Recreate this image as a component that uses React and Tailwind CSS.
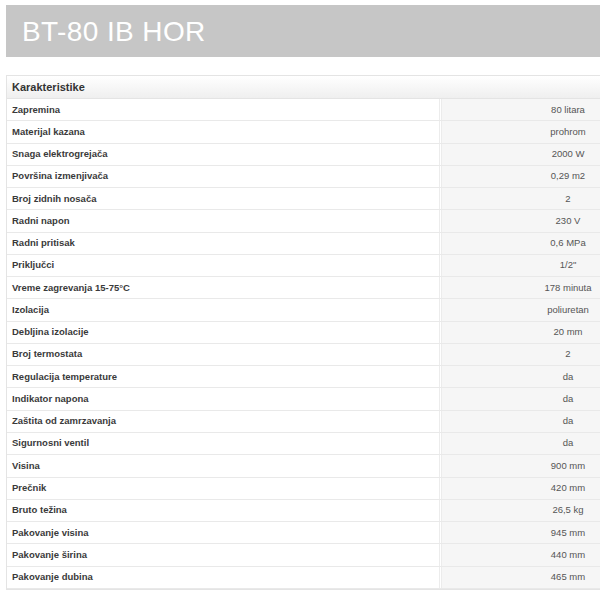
import React from "react";

const rows = [
  ["Zapremina", "80 litara"],
  ["Materijal kazana", "prohrom"],
  ["Snaga elektrogrejača", "2000 W"],
  ["Površina izmenjivača", "0,29 m2"],
  ["Broj zidnih nosača", "2"],
  ["Radni napon", "230 V"],
  ["Radni pritisak", "0,6 MPa"],
  ["Priključci", "1/2\""],
  ["Vreme zagrevanja 15-75°C", "178 minuta"],
  ["Izolacija", "poliuretan"],
  ["Debljina izolacije", "20 mm"],
  ["Broj termostata", "2"],
  ["Regulacija temperature", "da"],
  ["Indikator napona", "da"],
  ["Zaštita od zamrzavanja", "da"],
  ["Sigurnosni ventil", "da"],
  ["Visina", "900 mm"],
  ["Prečnik", "420 mm"],
  ["Bruto težina", "26,5 kg"],
  ["Pakovanje visina", "945 mm"],
  ["Pakovanje širina", "440 mm"],
  ["Pakovanje dubina", "465 mm"],
];

export default function App() {
  return (
    <div
      className="w-[600px] h-[600px] overflow-hidden bg-white"
      style={{ fontFamily: '"Liberation Sans", Arial, sans-serif' }}
    >
      <div className="mt-[5px] ml-[6px] h-[52px] w-[700px] bg-[#c6c6c6] flex items-center pl-[16px]">
        <span className="text-white text-[28px] leading-none tracking-[0.4px] pt-[1px]">BT-80 IB HOR</span>
      </div>
      <div className="mt-[18px] ml-[6px] w-[689px] border border-[#e4e4e4]">
        <div className="h-[23px] flex items-center pl-[5px] border-b border-[#e4e4e4] bg-gradient-to-b from-white to-[#efefef]">
          <span className="text-[11px] font-bold text-[#333]">Karakteristike</span>
        </div>
        {rows.map(([label, value], i) => (
          <div key={i} className="flex h-[22.27px] border-b border-[#e9e9e9]">
            <div className="w-[433px] border-r border-[#ececec] flex items-center pl-[5px]">
              <span className="text-[9.5px] font-bold text-[#3a3a3a]">{label}</span>
            </div>
            <div className="ml-[1px] flex-1 border-l border-[#ececec] bg-[#f6f6f6] flex items-center justify-center">
              <span className="text-[9.5px] text-[#555]">{value}</span>
            </div>
          </div>
        ))}
      </div>
    </div>
  );
}
